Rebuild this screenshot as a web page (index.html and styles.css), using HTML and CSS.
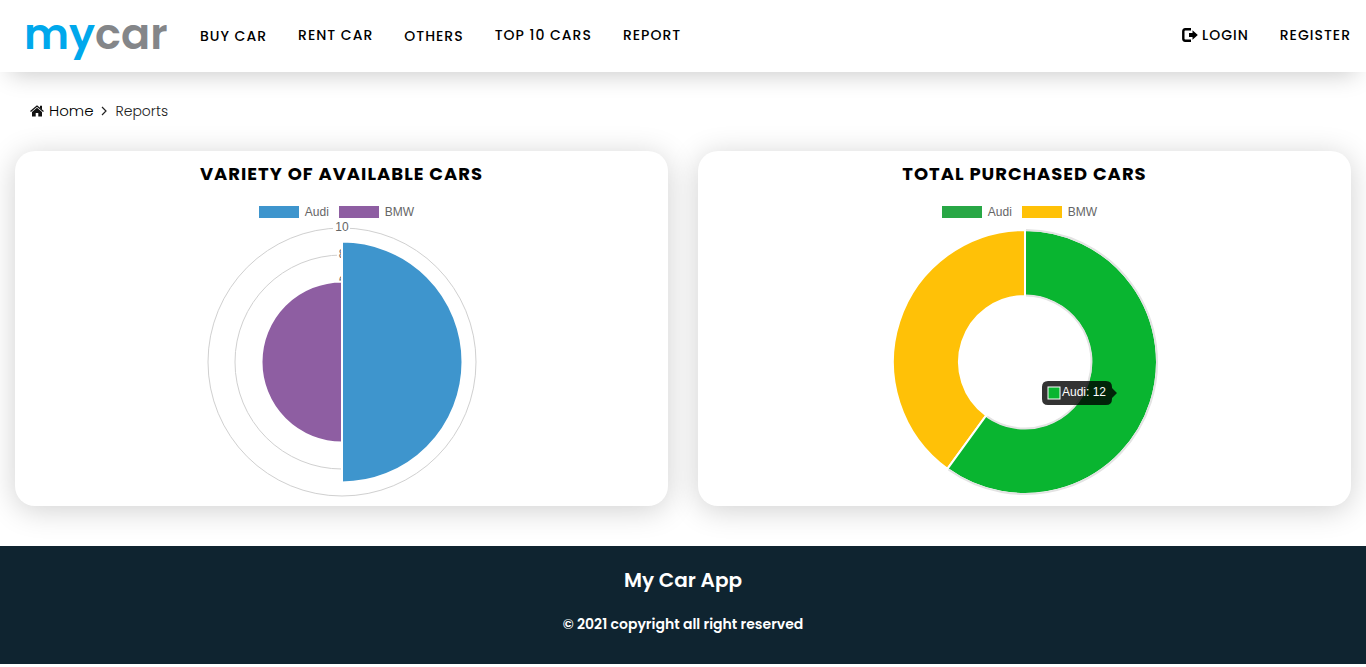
FILE: index.html
```html
<!DOCTYPE html>
<html lang="en">
<head>
<meta charset="utf-8">
<meta name="viewport" content="width=device-width, initial-scale=1">
<title>My Car App - Reports</title>
<link rel="stylesheet" href="styles.css">
</head>
<body>
<header class="site-header">
  <a class="logo" href="#"><span class="logo-my">my</span><span class="logo-car">car</span></a>
  <nav class="main-nav">
    <button class="nav-item nav-menu" type="button">BUY CAR</button>
    <a class="nav-item" href="#">RENT CAR</a>
    <button class="nav-item nav-menu" type="button">OTHERS</button>
    <a class="nav-item" href="#">TOP 10 CARS</a>
    <a class="nav-item" href="#">REPORT</a>
  </nav>
  <nav class="user-nav">
    <a class="nav-item login" href="#">
      <svg class="login-icon" viewBox="0 0 16 14" aria-hidden="true">
        <path d="M9 1.3H3.2Q1.3 1.3 1.3 3.2V10.8Q1.3 12.7 3.2 12.7H9" fill="none" stroke="#000" stroke-width="2.4"/>
        <path d="M7 5H10.5V2.2L15.8 7L10.5 11.8V9H7Z" fill="#000"/>
      </svg>LOGIN</a>
    <a class="nav-item" href="#">REGISTER</a>
  </nav>
</header>

<main>
  <nav class="breadcrumb" aria-label="Breadcrumb">
    <a class="crumb-home" href="#">
      <svg class="home-icon" viewBox="0 0 14 12" aria-hidden="true">
        <path d="M7 2.8L12 7V11.5H8.3V8H5.7V11.5H2V7Z" fill="#111"/>
        <path d="M10 .8H12V4.5L10 2.9Z" fill="#111"/>
        <path d="M.5 6.5L7 1.1L13.5 6.5" fill="none" stroke="#111" stroke-width="1.3"/>
      </svg>Home</a>
    <svg class="crumb-arrow" viewBox="0 0 6 10" aria-hidden="true"><path d="M1 1L5 5L1 9" fill="none" stroke="#222" stroke-width="1.2"/></svg>
    <span class="crumb-current">Reports</span>
  </nav>

  <div class="cards">
    <section class="card">
      <h2 class="card-title">VARIETY OF AVAILABLE CARS</h2>
      <ul class="legend">
        <li class="legend-item"><span class="swatch swatch-blue"></span>Audi</li>
        <li class="legend-item"><span class="swatch swatch-purple"></span>BMW</li>
      </ul>
      <svg class="chart" viewBox="-141 -135 281 270" role="img" aria-label="Available cars: Audi 9, BMW 6">
        <circle class="ring" r="107"/>
        <circle class="ring" r="134"/>
        <rect class="tick-back" x="-9" y="-143" width="17" height="16"/>
        <rect class="tick-back" x="-5" y="-116" width="10" height="16"/>
        <text class="tick" x="0" y="-131">10</text>
        <text class="tick" x="0" y="-104">8</text>
        <text class="tick" x="0" y="-77">6</text>
        <path class="slice slice-blue" d="M0 0V-120.5A120.5 120.5 0 0 1 0 120.5Z"/>
        <path class="slice slice-purple" d="M0 0V80.5A80.5 80.5 0 0 1 0 -80.5Z"/>
      </svg>
    </section>

    <section class="card">
      <h2 class="card-title">TOTAL PURCHASED CARS</h2>
      <ul class="legend">
        <li class="legend-item"><span class="swatch swatch-green"></span>Audi</li>
        <li class="legend-item"><span class="swatch swatch-yellow"></span>BMW</li>
      </ul>
      <svg class="chart" viewBox="-141 -135 281 270" role="img" aria-label="Purchased cars: Audi 12, BMW 8">
        <path class="slice slice-yellow" d="M-77.6 106.8A132 132 0 0 1 0 -132V-66A66 66 0 0 0 -38.8 53.4Z"/>
        <path class="slice slice-green" d="M0 -132A132 132 0 1 1 -77.6 106.8L-38.8 53.4A66 66 0 1 0 0 -66Z"/>
        <path class="halo" d="M1 -132A132 132 0 1 1 -76.6 107.5M1 -66.5A66.5 66.5 0 1 1 -38 54.6"/>
        <path class="tip-box" d="M23 19H81Q87 19 87 25V26L92 31L87 36V37Q87 43 81 43H23Q17 43 17 37V25Q17 19 23 19Z"/>
        <rect class="tip-swatch" x="23" y="25" width="12" height="12"/>
        <text class="tip-text" x="37" y="34">Audi: 12</text>
      </svg>
    </section>
  </div>
</main>

<footer class="site-footer">
  <h3 class="footer-title">My Car App</h3>
  <p class="footer-copy">© 2021 copyright all right reserved</p>
</footer>
</body>
</html>
```
FILE: styles.css
```css
* { box-sizing: border-box; }

body {
  margin: 0;
  background: #fff;
  color: #000;
  font-family: Poppins, Inter, "Open Sans", sans-serif;
}

a { color: inherit; text-decoration: none; }

.site-header {
  display: flex;
  align-items: center;
  height: 72px;
  padding: 0 15px 0 24px;
  background: #fff;
  box-shadow: 0 12px 24px -10px rgba(0, 0, 0, 0.22);
}

.logo {
  width: 160px;
  padding-bottom: 4px;
  font-size: 43px;
  font-weight: 600;
  line-height: 66px;
}
.logo-my { color: #00a8ec; }
.logo-car { color: #848689; }

.main-nav, .user-nav { display: flex; align-items: center; gap: 31px; }
.main-nav { padding-left: 16px; }
.user-nav { margin-left: auto; }

.nav-item {
  padding: 0 0 2px;
  border: 0;
  background: none;
  color: #000;
  font: inherit;
  font-size: 14px;
  font-weight: 500;
  line-height: 24px;
  letter-spacing: 1px;
  white-space: nowrap;
}
.nav-menu { padding-bottom: 0; cursor: pointer; }

.login { display: flex; align-items: center; gap: 4px; }
.login-icon { width: 16px; height: 14px; }

.breadcrumb {
  display: flex;
  align-items: center;
  height: 79px;
  padding: 0 30px 1px;
  color: #000;
  font-weight: 300;
}
.crumb-home { display: flex; align-items: center; gap: 5px; font-size: 15px; line-height: 24px; }
.home-icon { width: 14px; height: 12px; }
.crumb-arrow { width: 6px; height: 10px; margin: 0 8px; }
.crumb-current { font-size: 14px; line-height: 22px; color: #222; }

.cards {
  display: grid;
  grid-template-columns: 1fr 1fr;
  gap: 30px;
  padding: 0 15px 40px;
}

.card {
  padding: 10px 10px 9px;
  border-radius: 20px;
  background: #fff;
  box-shadow: 0 4px 30px rgba(0, 0, 0, 0.19);
}

.card-title {
  margin: 0;
  font-size: 18px;
  font-weight: 700;
  line-height: 26px;
  letter-spacing: 1px;
  text-align: center;
}

.legend {
  display: flex;
  justify-content: center;
  margin: 18px 0 0;
  padding: 0;
  list-style: none;
  font: 12px/14px "Liberation Sans", Arial, sans-serif;
  color: #666;
}
.legend-item { display: flex; align-items: center; gap: 6px; padding-right: 10px; }
.swatch { width: 40px; height: 12px; }
.swatch-blue { background: #3e95cd; }
.swatch-purple { background: #8e5ea2; }
.swatch-green { background: #28a745; }
.swatch-yellow { background: #ffc107; }

.chart {
  display: block;
  width: 281px;
  max-width: 100%;
  margin: 8px auto 0;
  overflow: visible;
  font: 12px "Liberation Sans", Arial, sans-serif;
}
.ring { fill: none; stroke: #d0d0d0; }
.tick-back { fill: #fff; }
.tick { fill: #666; text-anchor: middle; }
.slice { stroke: #fff; stroke-width: 2px; }
.slice-blue { fill: #3e95cd; }
.slice-purple { fill: #8e5ea2; }
.slice-green { fill: #09b530; }
.slice-yellow { fill: #ffc107; }
.halo { fill: none; stroke: #e3e3e3; stroke-width: 2px; }
.tip-box { fill: rgba(0, 0, 0, 0.8); }
.tip-swatch { fill: #09b530; stroke: #fff; }
.tip-text { fill: #fff; }

.site-footer {
  padding: 19px 15px 27px;
  background: #0f2430;
  color: #fff;
  text-align: center;
}
.footer-title { margin: 0; font-size: 20px; font-weight: 600; line-height: 30px; }
.footer-copy { margin: 16px 0 0; font-size: 14px; font-weight: 600; line-height: 26px; }
```
